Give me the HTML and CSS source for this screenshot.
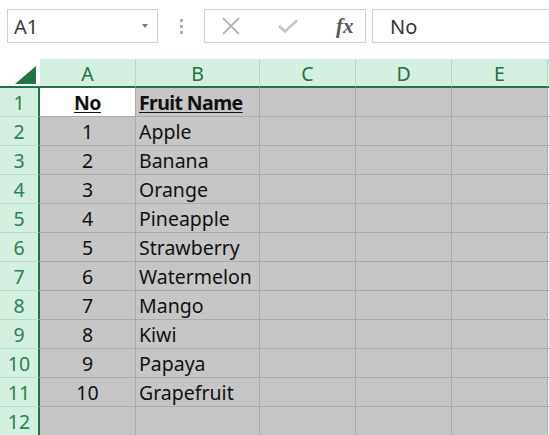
FILE: index.html
```html
<!DOCTYPE html>
<html>
<head>
<meta charset="utf-8">
<link rel="stylesheet" href="styles.css">
</head>
<body>
<div class="toolbar">
  <div class="namebox"><span class="ref">A1</span><span class="arrow"></span></div>
  <div class="grip"><i></i><i></i><i></i></div>
  <div class="buttons">
    <svg class="icon-x" width="20" height="18" viewBox="0 0 20 18"><path d="M2 1 L18 17 M18 1 L2 17" stroke="#b5b5b5" stroke-width="1.8" fill="none"/></svg>
    <svg class="icon-check" width="20" height="14" viewBox="0 0 20 14"><path d="M1 7 L7 12.5 L19 1.5" stroke="#c4c4c4" stroke-width="2.6" fill="none"/></svg>
    <span class="fx">fx</span>
  </div>
  <div class="formula">No</div>
</div>
<div class="sheet">
  <div class="corner"><span class="tri"></span></div>
  <div class="colhead">A</div>
  <div class="colhead">B</div>
  <div class="colhead">C</div>
  <div class="colhead">D</div>
  <div class="colhead">E</div>
  <div class="colhead edge"></div>

  <div class="rowhead">1</div>
  <div class="cell active center"><span class="hdr">No</span></div>
  <div class="cell"><span class="hdr">Fruit Name</span></div>
  <div class="cell"></div><div class="cell"></div><div class="cell"></div><div class="cell edge"></div>

  <div class="rowhead">2</div>
  <div class="cell center">1</div><div class="cell">Apple</div>
  <div class="cell"></div><div class="cell"></div><div class="cell"></div><div class="cell edge"></div>

  <div class="rowhead">3</div>
  <div class="cell center">2</div><div class="cell">Banana</div>
  <div class="cell"></div><div class="cell"></div><div class="cell"></div><div class="cell edge"></div>

  <div class="rowhead">4</div>
  <div class="cell center">3</div><div class="cell">Orange</div>
  <div class="cell"></div><div class="cell"></div><div class="cell"></div><div class="cell edge"></div>

  <div class="rowhead">5</div>
  <div class="cell center">4</div><div class="cell">Pineapple</div>
  <div class="cell"></div><div class="cell"></div><div class="cell"></div><div class="cell edge"></div>

  <div class="rowhead">6</div>
  <div class="cell center">5</div><div class="cell">Strawberry</div>
  <div class="cell"></div><div class="cell"></div><div class="cell"></div><div class="cell edge"></div>

  <div class="rowhead">7</div>
  <div class="cell center">6</div><div class="cell">Watermelon</div>
  <div class="cell"></div><div class="cell"></div><div class="cell"></div><div class="cell edge"></div>

  <div class="rowhead">8</div>
  <div class="cell center">7</div><div class="cell">Mango</div>
  <div class="cell"></div><div class="cell"></div><div class="cell"></div><div class="cell edge"></div>

  <div class="rowhead">9</div>
  <div class="cell center">8</div><div class="cell">Kiwi</div>
  <div class="cell"></div><div class="cell"></div><div class="cell"></div><div class="cell edge"></div>

  <div class="rowhead">10</div>
  <div class="cell center">9</div><div class="cell">Papaya</div>
  <div class="cell"></div><div class="cell"></div><div class="cell"></div><div class="cell edge"></div>

  <div class="rowhead">11</div>
  <div class="cell center">10</div><div class="cell">Grapefruit</div>
  <div class="cell"></div><div class="cell"></div><div class="cell"></div><div class="cell edge"></div>

  <div class="rowhead">12</div>
  <div class="cell"></div><div class="cell"></div>
  <div class="cell"></div><div class="cell"></div><div class="cell"></div><div class="cell edge"></div>
</div>
</body>
</html>
```
FILE: styles.css
```css
* { box-sizing: border-box; }
html, body { margin: 0; padding: 0; background: #ffffff; }
body {
  width: 549px;
  height: 435px;
  overflow: hidden;
  font-family: "Noto Sans", "Open Sans", sans-serif;
}
.toolbar {
  height: 59px;
  display: flex;
  align-items: flex-start;
  padding: 9px 0 0 7px;
}
.namebox {
  width: 151px;
  height: 34px;
  border: 1px solid #d0d0d0;
  display: flex;
  align-items: center;
  justify-content: space-between;
  padding: 0 9px 0 6px;
}
.ref { font-size: 20px; color: #3a3a3a; }
.arrow {
  width: 0; height: 0;
  border-left: 3.5px solid transparent;
  border-right: 3.5px solid transparent;
  border-top: 4px solid #7a7a7a;
}
.grip {
  width: 46px;
  height: 34px;
  display: flex;
  flex-direction: column;
  align-items: center;
  justify-content: center;
  gap: 3px;
}
.grip i { display: block; width: 3px; height: 3px; background: #b0b0b0; }
.buttons {
  width: 162px;
  height: 34px;
  border: 1px solid #d0d0d0;
  display: flex;
  align-items: center;
  padding: 0 0 0 16px;
}
.icon-check { margin-left: 37px; }
.fx {
  margin-left: 38px;
  font-family: "Liberation Serif", serif;
  font-style: italic;
  font-weight: bold;
  font-size: 21px;
  color: #5a5a5a;
}
.formula {
  margin-left: 6px;
  flex: 1;
  height: 34px;
  border: 1px solid #d0d0d0;
  border-right: none;
  display: flex;
  align-items: center;
  padding-left: 17px;
  font-size: 20px;
  color: #333333;
}
.sheet {
  display: grid;
  grid-template-columns: 40px 96px 124px 96px 96px 96px 1fr;
  grid-template-rows: 29px repeat(12, 29px);
}
.corner {
  background: #ffffff;
  border-bottom: 2px solid #217346;
  position: relative;
}
.tri {
  position: absolute;
  left: 15px;
  top: 7px;
  width: 0; height: 0;
  border-left: 21px solid transparent;
  border-bottom: 18px solid #217346;
}
.colhead {
  background: #d3f0e0;
  border-right: 1px solid #b7d8c5;
  border-bottom: 2px solid #217346;
  color: #217346;
  font-size: 19.5px;
  display: flex;
  align-items: center;
  justify-content: center;
  padding-top: 2px;
}
.colhead.edge { border-right: none; }
.rowhead {
  background: #d3f0e0;
  border-right: 2px solid #217346;
  border-bottom: 1px solid #b7d8c5;
  color: #2f8052;
  font-size: 19.5px;
  display: flex;
  align-items: flex-end;
  justify-content: center;
  padding-bottom: 0;
  line-height: 27px;
}
.cell {
  background: #c6c6c6;
  border-right: 1px solid #ababab;
  border-bottom: 1px solid #ababab;
  color: #111111;
  font-size: 19.5px;
  line-height: 27px;
  display: flex;
  align-items: flex-end;
  padding: 0 0 0 3px;
  white-space: nowrap;
}
.cell.edge { border-right: none; background: #ffffff; }
.cell.center { justify-content: center; padding-left: 0; }
.cell.active { background: #ffffff; }
.hdr { font-weight: bold; letter-spacing: -0.6px; text-decoration: underline; text-underline-offset: 2px; }
```
